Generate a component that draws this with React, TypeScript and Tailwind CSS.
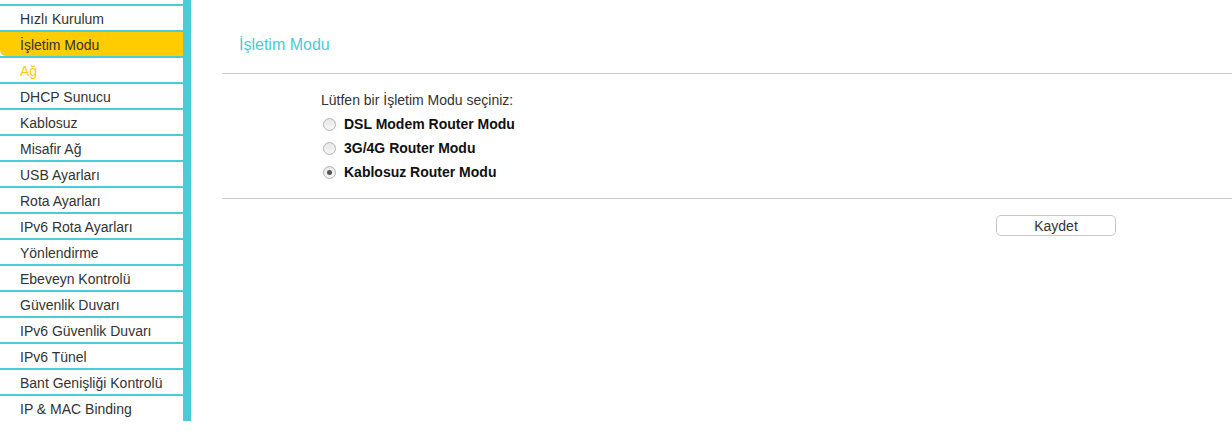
const menu = [
  { label: "Hızlı Kurulum" },
  { label: "İşletim Modu", active: true },
  { label: "Ağ", parent: true },
  { label: "DHCP Sunucu" },
  { label: "Kablosuz" },
  { label: "Misafir Ağ" },
  { label: "USB Ayarları" },
  { label: "Rota Ayarları" },
  { label: "IPv6 Rota Ayarları" },
  { label: "Yönlendirme" },
  { label: "Ebeveyn Kontrolü" },
  { label: "Güvenlik Duvarı" },
  { label: "IPv6 Güvenlik Duvarı" },
  { label: "IPv6 Tünel" },
  { label: "Bant Genişliği Kontrolü" },
  { label: "IP & MAC Binding" },
];

const modes = [
  { label: "DSL Modem Router Modu", checked: false },
  { label: "3G/4G Router Modu", checked: false },
  { label: "Kablosuz Router Modu", checked: true },
];

function Radio({ checked }: { checked: boolean }) {
  return (
    <span className="flex h-[13px] w-[13px] items-center justify-center rounded-full border border-[#b4b4b4] bg-gradient-to-b from-[#e6e6e6] to-[#f8f8f8]">
      {checked && <span className="h-[5px] w-[5px] rounded-full bg-[#555]" />}
    </span>
  );
}

export default function App() {
  return (
    <div className="flex h-[441px] w-[1232px] overflow-hidden bg-white font-['Liberation_Sans',Arial,sans-serif] text-[14px] leading-[16px] text-[#333]">
      {/* Sidebar */}
      <aside className="flex h-[421px] shrink-0">
        <ul className="w-[183px] pt-[4px]">
          {menu.map((m) => (
            <li
              key={m.label}
              className={
                "flex h-[26px] items-center border-t-2 border-[#4acbd6] pl-[20px] pt-[1px] " +
                (m.active ? "rounded-bl-[6px] bg-[#ffcc00]" : "") +
                (m.parent ? "text-[#ffcc00]" : "")
              }
            >
              {m.label}
            </li>
          ))}
        </ul>
        <div className="w-[8px] bg-[#4acbd6]" />
      </aside>

      {/* Content */}
      <main className="flex-1 pl-[31px]">
        <h1 className="h-[74px] border-b border-[#cccccc] pl-[17px] pt-[36px] text-[16px] leading-[18px] text-[#4acbd6]">
          İşletim Modu
        </h1>
        <section className="border-b border-[#cccccc] pb-[14px] pl-[99px] pt-[18px]">
          <p className="mb-[4px] leading-[16px]">Lütfen bir İşletim Modu seçiniz:</p>
          <div className="flex flex-col">
            {modes.map((m) => (
              <label key={m.label} className="flex h-[24px] items-center gap-[8px] pl-[2px] font-bold text-[#111]">
                <Radio checked={m.checked} />
                {m.label}
              </label>
            ))}
          </div>
        </section>
        <div className="flex pl-[774px] pt-[16px]">
          <button className="h-[21px] w-[120px] rounded-[5px] border border-[#c8c8c8] bg-white text-[14px] leading-[16px] text-[#333]">
            Kaydet
          </button>
        </div>
      </main>
    </div>
  );
}
